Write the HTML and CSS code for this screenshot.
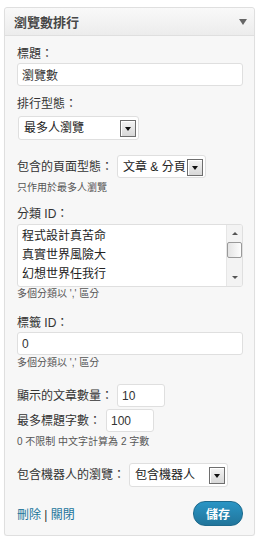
FILE: index.html
```html
<!DOCTYPE html>
<html lang="zh-Hant">
<head>
    <meta charset="UTF-8">
    <meta name="viewport" content="width=device-width, initial-scale=1.0">
    <title>瀏覽數排行</title>
    <link rel="stylesheet" href="styles.css">
</head>
<body>
    <div class="widget">
        <div class="widget-top">
            <h3 class="widget-title">瀏覽數排行</h3>
            <span class="toggle"></span>
        </div>
        <div class="widget-inside">
            <label class="label first">標題：</label>
            <input class="text full" type="text" value="瀏覽數">

            <label class="label gap">排行型態：</label>
            <div class="select sel-type">
                <span class="select-value">最多人瀏覽</span>
                <span class="select-btn"></span>
            </div>

            <div class="row row-pages">
                <label class="label">包含的頁面型態：</label>
                <div class="select sel-pages">
                    <span class="select-value">文章 &amp; 分頁</span>
                    <span class="select-btn"></span>
                </div>
            </div>
            <p class="note note-pages">只作用於最多人瀏覽</p>

            <label class="label label-cat">分類 ID：</label>
            <div class="list">
                <div class="list-items">
                    <div>程式設計真苦命</div>
                    <div>真實世界風險大</div>
                    <div>幻想世界任我行</div>
                </div>
                <div class="scrollbar">
                    <span class="sb-btn"><span class="sb-up"></span></span>
                    <span class="sb-thumb"></span>
                    <span class="sb-track"></span>
                    <span class="sb-btn"><span class="sb-down"></span></span>
                </div>
            </div>
            <p class="note">多個分類以 ',' 區分</p>

            <label class="label label-tag">標籤 ID：</label>
            <input class="text full" type="text" value="0">
            <p class="note note-tag">多個分類以 ',' 區分</p>

            <div class="row row-count">
                <label class="label">顯示的文章數量：</label>
                <input class="text num" type="text" value="10">
            </div>
            <div class="row row-len">
                <label class="label">最多標題字數：</label>
                <input class="text num" type="text" value="100">
            </div>
            <p class="note note-len">0 不限制 中文字計算為 2 字數</p>

            <div class="row row-bots">
                <label class="label">包含機器人的瀏覽：</label>
                <div class="select sel-bots">
                    <span class="select-value">包含機器人</span>
                    <span class="select-btn"></span>
                </div>
            </div>

            <div class="actions">
                <div class="links">
                    <a href="#">刪除</a> <span class="sep">|</span> <a href="#">關閉</a>
                </div>
                <button class="save">儲存</button>
            </div>
        </div>
    </div>
</body>
</html>
```

FILE: styles.css
```css
* {
    box-sizing: border-box;
}

body {
    margin: 0;
    background-color: #fff;
    font-family: "Liberation Sans", "Noto Sans CJK TC", sans-serif;
    font-size: 12px;
    color: #333;
}

.widget {
    margin: 7px 6px 0 4px;
    border: 1px solid #dfdfdf;
    border-radius: 3px;
    background-color: #f7f7f7;
    box-shadow: 0 1px 1px rgba(0, 0, 0, 0.04);
}

.widget-top {
    display: flex;
    justify-content: space-between;
    align-items: center;
    height: 28px;
    padding: 0 7px 0 9px;
    border-bottom: 1px solid #dfdfdf;
    border-radius: 3px 3px 0 0;
    background: linear-gradient(#f9f9f9, #ececec);
}

.widget-title {
    margin: 0;
    font-size: 13px;
    font-weight: bold;
    color: #464646;
}

.toggle {
    width: 0;
    height: 0;
    border-left: 4px solid transparent;
    border-right: 4px solid transparent;
    border-top: 6px solid #666;
}

.widget-inside {
    padding: 10px 11px 9px 12px;
}

.label {
    display: block;
    line-height: 16px;
    color: #333;
}

.gap {
    margin-top: 10px;
}

.text {
    display: block;
    height: 23px;
    padding: 0 4px;
    border: 1px solid #dfdfdf;
    border-radius: 3px;
    background-color: #fff;
    font-family: "Liberation Sans", "Noto Sans CJK TC", sans-serif;
    font-size: 12px;
    color: #333;
    outline: none;
}

.full {
    width: 100%;
    margin-top: 1px;
}

.num {
    width: 48px;
}

.select {
    position: relative;
    height: 24px;
    border: 1px solid #dfdfdf;
    border-radius: 3px;
    background-color: #fff;
    overflow: hidden;
    white-space: nowrap;
}

.select-value {
    display: block;
    padding-left: 5px;
    line-height: 22px;
    color: #222;
}

.select-btn {
    position: absolute;
    top: 3px;
    right: 2px;
    width: 16px;
    height: 17px;
    border: 1px solid #6e6e6e;
    background: linear-gradient(#f4f4f4, #d8d8d8);
    box-shadow: inset 1px 1px 0 #fff;
}

.select-btn::after {
    content: "";
    position: absolute;
    left: 4px;
    top: 6px;
    border-left: 3px solid transparent;
    border-right: 3px solid transparent;
    border-top: 4px solid #111;
}

.sel-type {
    width: 121px;
    margin: 4px 0 0 1px;
}

.sel-pages {
    width: 89px;
    height: 23px;
}

.sel-bots {
    width: 99px;
}

.row {
    display: flex;
    align-items: center;
    gap: 4px;
}

.row-pages {
    margin-top: 15px;
}

.note {
    margin: 0;
    font-size: 10px;
    line-height: 14px;
    color: #555;
}

.note-pages {
    margin-top: 3px;
}

.label-cat {
    margin-top: 11px;
}

.list {
    display: flex;
    height: 63px;
    margin-top: 2px;
    border: 1px solid #dfdfdf;
    border-radius: 3px;
    background-color: #fff;
    overflow: hidden;
}

.list-items {
    flex: 1;
    padding: 2px 0 0 4px;
    line-height: 19px;
    color: #222;
}

.scrollbar {
    display: flex;
    flex-direction: column;
    width: 16px;
    border-left: 1px solid #e6e6e6;
    background-color: #f3f3f3;
}

.sb-btn {
    position: relative;
    height: 17px;
}

.sb-up,
.sb-down {
    position: absolute;
    left: 5px;
    top: 7px;
    border-left: 3px solid transparent;
    border-right: 3px solid transparent;
}

.sb-up {
    border-bottom: 3px solid #555;
}

.sb-down {
    border-top: 3px solid #555;
}

.sb-thumb {
    height: 16px;
    border: 1px solid #9a9a9a;
    border-radius: 2px;
    background: linear-gradient(to right, #e4e4e4, #fdfdfd);
}

.sb-track {
    flex: 1;
}

.label-tag {
    margin-top: 14px;
}

.note-tag {
    margin-top: 1px;
}

.row-count {
    margin-top: 14px;
}

.row-len {
    margin-top: 2px;
    gap: 5px;
}

.note-len {
    margin-top: 3px;
}

.row-bots {
    margin-top: 14px;
}

.actions {
    display: flex;
    justify-content: space-between;
    align-items: center;
    margin-top: 14px;
}

.links a {
    color: #21759b;
    text-decoration: none;
}

.sep {
    color: #333;
}

.save {
    width: 50px;
    height: 25px;
    padding: 0;
    border: 1px solid #1e6a8d;
    border-radius: 12px;
    background: linear-gradient(#2a95c5, #21759b);
    color: #fff;
    font-family: "Liberation Sans", "Noto Sans CJK TC", sans-serif;
    font-size: 12px;
    font-weight: bold;
    cursor: pointer;
}
```
